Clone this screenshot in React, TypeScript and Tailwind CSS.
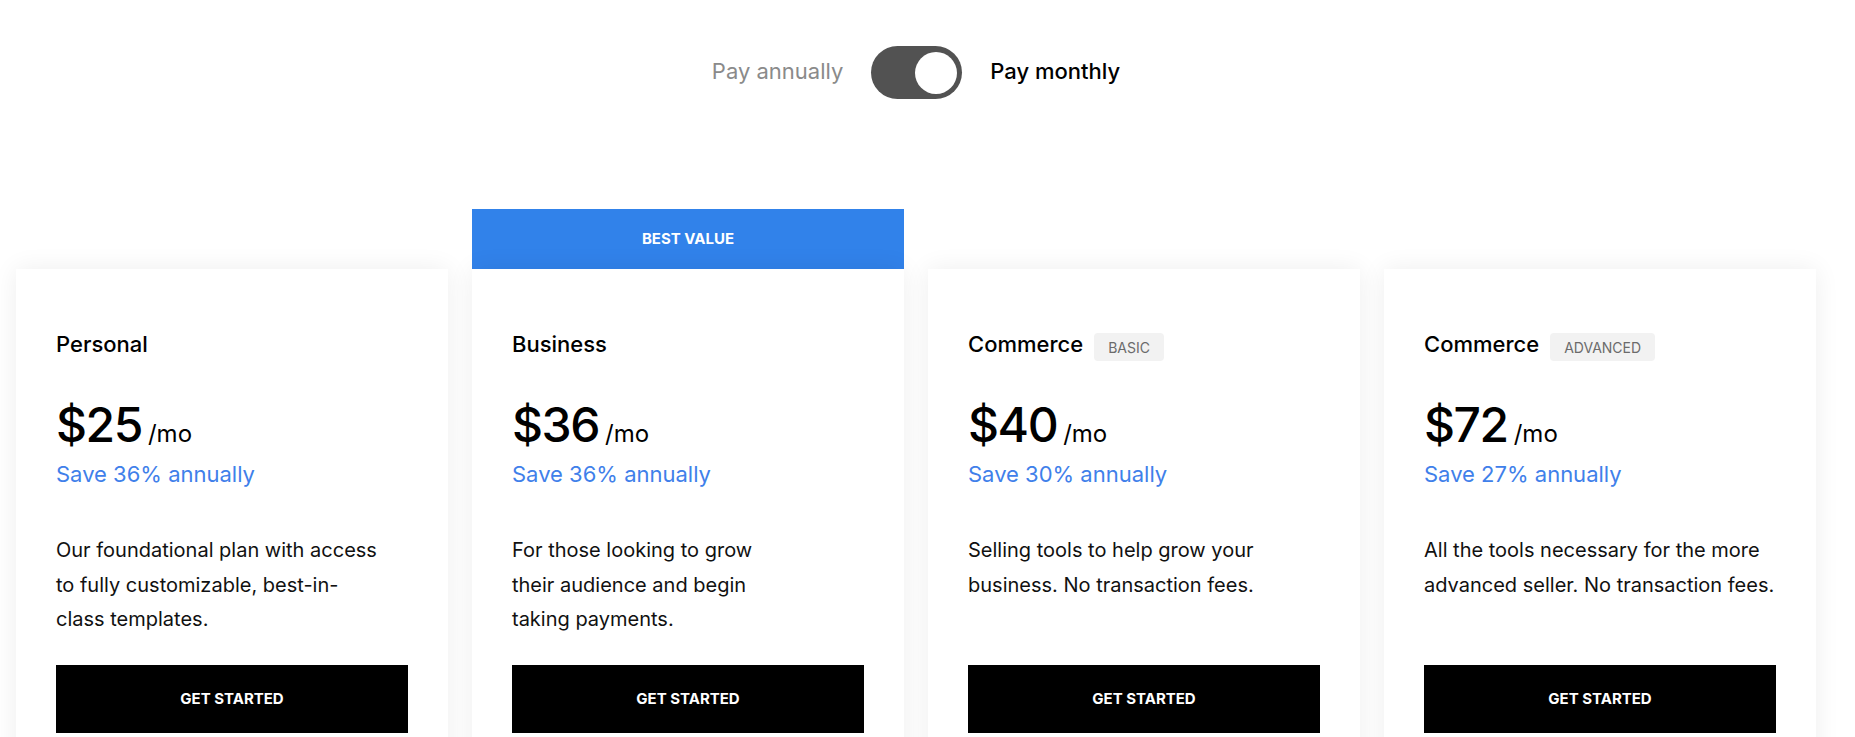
import { useState } from "react";

type Plan = {
  name: string;
  tag?: string;
  price: number;
  save: number;
  lines: string[];
  best?: boolean;
};

const PLANS: Plan[] = [
  {
    name: "Personal",
    price: 25,
    save: 36,
    lines: ["Our foundational plan with access", "to fully customizable, best-in-", "class templates."],
  },
  {
    name: "Business",
    price: 36,
    save: 36,
    best: true,
    lines: ["For those looking to grow", "their audience and begin", "taking payments."],
  },
  {
    name: "Commerce",
    tag: "Basic",
    price: 40,
    save: 30,
    lines: ["Selling tools to help grow your", "business. No transaction fees."],
  },
  {
    name: "Commerce",
    tag: "Advanced",
    price: 72,
    save: 27,
    lines: ["All the tools necessary for the more", "advanced seller. No transaction fees."],
  },
];

const BillingToggle = () => {
  const [monthly, setMonthly] = useState(true);

  return (
    <div className="flex items-center justify-center gap-[28px]">
      <span className={`mb-[4px] text-[22px] leading-[28px] ${monthly ? "text-[#8a8a8a]" : "text-black font-medium"}`}>
        Pay annually
      </span>
      <button
        type="button"
        onClick={() => setMonthly((prev) => !prev)}
        className={`flex h-[53px] w-[91px] items-center rounded-full bg-[#525252] px-[5px] ${
          monthly ? "justify-end" : "justify-start"
        }`}>
        <span className="block h-[42px] w-[42px] rounded-full bg-white" />
      </button>
      <span className={`mb-[4px] text-[22px] leading-[28px] ${monthly ? "text-black font-medium" : "text-[#8a8a8a]"}`}>
        Pay monthly
      </span>
    </div>
  );
};

const PlanCard = ({ plan }: { plan: Plan }) => {
  return (
    <div className="flex flex-col">
      <div className="h-[60px]">
        {plan.best && (
          <div className="flex h-full items-center justify-center bg-[#3182ea] text-[15px] font-bold text-white">
            BEST VALUE
          </div>
        )}
      </div>
      <div className="flex flex-col bg-white px-[40px] pt-[61px] pb-[60px] shadow-[0_0_24px_rgba(0,0,0,0.07)]">
        <div className="flex h-[28px] items-start gap-[11px]">
          <h3 className="text-[22px] font-medium leading-[28px] text-black">{plan.name}</h3>
          {plan.tag && (
            <span className="mt-[3px] flex h-[28px] items-center rounded-[4px] bg-[#f2f2f2] px-[14px] text-[14px] uppercase text-[#6b6b6b]">
              {plan.tag}
            </span>
          )}
        </div>

        <div className="mt-[43px] flex items-baseline">
          <span className="text-[48px] font-medium leading-[48px] tracking-[-0.03em] text-black">${plan.price}</span>
          <span className="ml-[6px] text-[24px] text-black">/mo</span>
        </div>
        <p className="mt-[8px] text-[22px] leading-[28px] text-[#3f80ea]">Save {plan.save}% annually</p>

        <p className="mt-[45px] min-h-[104px] text-[20px] leading-[34.5px] text-[#111]">
          {plan.lines.map((line, i) => (
            <span key={i} className="block">
              {line}
            </span>
          ))}
        </p>

        <button
          type="button"
          className="mt-[28px] flex h-[68px] w-full items-center justify-center bg-black text-[15px] font-bold text-white">
          GET STARTED
        </button>
      </div>
    </div>
  );
};

const App = () => {
  return (
    <div className="min-h-screen bg-white font-['Inter',sans-serif]">
      <div className="ml-[16px] w-[1800px] pt-[46px]">
        <BillingToggle />
        <div className="mt-[110px] grid grid-cols-4 gap-[24px]">
          {PLANS.map((plan, i) => (
            <PlanCard key={i} plan={plan} />
          ))}
        </div>
      </div>
    </div>
  );
};

export default App;
